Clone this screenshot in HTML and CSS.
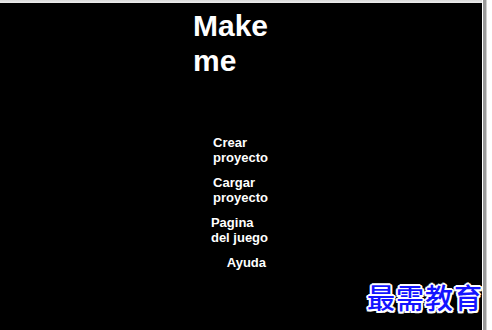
FILE: index.html
```html
<!DOCTYPE html>
<html lang="es">
<head>
<meta charset="utf-8">
<title>Make me</title>
<link rel="stylesheet" href="styles.css">
</head>
<body>
<div class="window">
  <div class="topbar"></div>
  <div class="row">
    <main class="stage">
      <div class="column">
        <h1 class="title">Make me</h1>
        <nav class="menu">
          <div class="item">Crear<br>proyecto</div>
          <div class="item">Cargar<br>proyecto</div>
          <div class="item">Pagina<br>del juego</div>
          <div class="item item-short">Ayuda</div>
        </nav>
      </div>
    </main>
    <div class="edge"></div>
  </div>
  <div class="watermark">最需教育</div>
</div>
</body>
</html>
```
FILE: styles.css
```css
html, body {
  margin: 0;
  padding: 0;
  background: #ffffff;
}
.window {
  position: relative;
  width: 492px;
  height: 330px;
  overflow: hidden;
  display: flex;
  flex-direction: column;
}
.topbar {
  height: 3px;
  width: 482px;
  background: linear-gradient(#d8d8d8, #eeeeee);
  flex: none;
}
.row {
  flex: 1;
  display: flex;
}
.stage {
  width: 482px;
  background: #000000;
  padding-top: 6px;
  box-sizing: border-box;
}
.edge {
  width: 3px;
  margin-left: 1px;
  margin-top: -3px;
  background: #9a9a9a;
  border-right: 1px solid #cfcfcf;
}
.column {
  margin-left: 193px;
  width: 75px;
  display: flex;
  flex-direction: column;
  font-family: "Liberation Sans", Arial, sans-serif;
  color: #ffffff;
  font-weight: bold;
}
.title {
  margin: 0;
  font-size: 30px;
  line-height: 34.5px;
  font-weight: bold;
}
.menu {
  margin-top: 57px;
  display: flex;
  flex-direction: column;
  align-items: flex-end;
  gap: 10px;
  font-size: 13px;
  line-height: 15px;
}
.item {
  width: max-content;
  text-align: left;
}
.item-short {
  margin-right: 2px;
}
.watermark {
  position: absolute;
  left: 367px;
  top: 282px;
  font-family: "Noto Sans CJK SC", sans-serif;
  font-weight: 500;
  font-size: 28px;
  line-height: 30px;
  letter-spacing: 1px;
  color: #1414ff;
  text-shadow:
    2px 0 0 #fff, -2px 0 0 #fff, 0 2px 0 #fff, 0 -2px 0 #fff,
    1.5px 1.5px 0 #fff, -1.5px -1.5px 0 #fff, 1.5px -1.5px 0 #fff, -1.5px 1.5px 0 #fff;
}
```
